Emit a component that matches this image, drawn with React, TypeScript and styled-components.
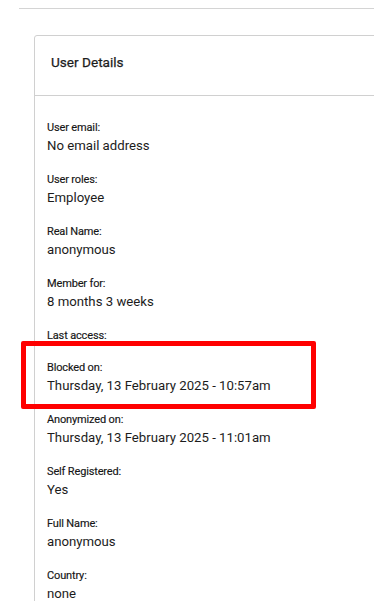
import React from "react";
import styled, { createGlobalStyle } from "styled-components";

const Global = createGlobalStyle`
  html, body { margin: 0; padding: 0; background: #ffffff; }
  body { font-family: Roboto, "Noto Sans", Arial, sans-serif; color: #222222; overflow: hidden; }
`;

const Page = styled.div`
  position: relative;
  width: 374px;
  height: 601px;
  overflow: hidden;
  padding-top: 8px;
  box-sizing: border-box;
`;

const TopRule = styled.div`
  margin-left: 19px;
  height: 1px;
  background: #d4d4d4;
`;

const Card = styled.section`
  margin: 26px -20px 0 34px;
  border: 1px solid #d0d0d0;
  border-radius: 3px;
  background: #fff;
`;

const CardHeader = styled.header`
  height: 60px;
  box-sizing: border-box;
  display: flex;
  align-items: flex-start;
  padding: 18px 0 0 16px;
  border-bottom: 1px solid #d0d0d0;
`;

const Title = styled.h2`
  margin: 0;
  font-size: 13.6px;
  line-height: 16px;
  font-weight: 400;
  -webkit-text-stroke: 0.25px #1c1c1c;
  color: #1c1c1c;
`;

const CardBody = styled.dl`
  margin: 0;
  padding: 25px 12px 0 12px;
  display: flex;
  flex-direction: column;
`;

const Field = styled.div`
  display: flex;
  flex-direction: column;
  margin-bottom: 18px;
`;

const Label = styled.dt`
  font-size: 11px;
  line-height: 14px;
  letter-spacing: -0.15px;
  -webkit-text-stroke: 0.15px #161616;
  color: #161616;
`;

const Value = styled.dd`
  margin: 1px 0 0 0;
  font-size: 13.2px;
  line-height: 19px;
  color: #1c1c1c;
  &:empty { display: none; }
`;

const Highlight = styled.div`
  position: absolute;
  left: 21px;
  top: 341px;
  width: 285px;
  height: 58px;
  border: 5px solid #ff0000;
  border-radius: 2px;
  pointer-events: none;
`;

const fields: [string, string][] = [
  ["User email:", "No email address"],
  ["User roles:", "Employee"],
  ["Real Name:", "anonymous"],
  ["Member for:", "8 months 3 weeks"],
  ["Last access:", ""],
  ["Blocked on:", "Thursday, 13 February 2025 - 10:57am"],
  ["Anonymized on:", "Thursday, 13 February 2025 - 11:01am"],
  ["Self Registered:", "Yes"],
  ["Full Name:", "anonymous"],
  ["Country:", "none"],
];

export default function App() {
  return (
    <>
      <Global />
      <Page>
        <TopRule />
        <Card>
          <CardHeader>
            <Title>User Details</Title>
          </CardHeader>
          <CardBody>
            {fields.map(([l, v]) => (
              <Field key={l}>
                <Label>{l}</Label>
                <Value>{v}</Value>
              </Field>
            ))}
          </CardBody>
        </Card>
        <Highlight />
      </Page>
    </>
  );
}
